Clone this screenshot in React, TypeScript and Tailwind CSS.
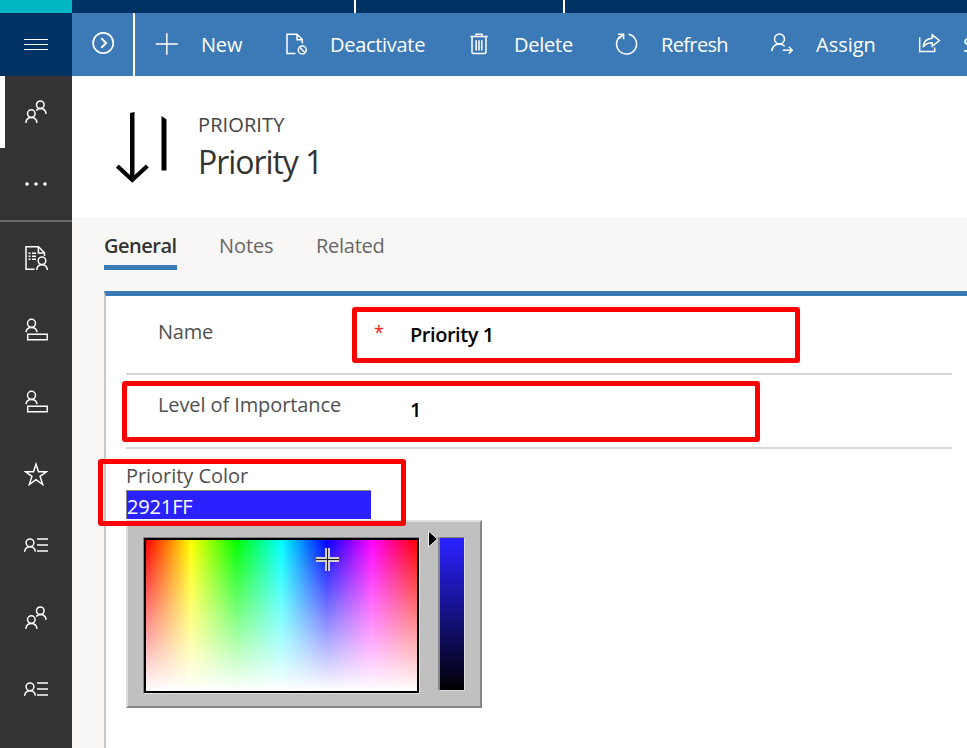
import type { ReactNode } from "react";

const stroke = {
  fill: "none",
  stroke: "currentColor",
  strokeWidth: 1.5,
};

function Icon({ children }: { children: ReactNode }) {
  return (
    <svg className="size-6 shrink-0" viewBox="0 0 24 24" {...stroke}>
      {children}
    </svg>
  );
}

function PeopleIcon() {
  return (
    <Icon>
      <circle cx="16.3" cy="4.8" r="3.8" />
      <path d="M12.2 10.6c1.2-1.4 2.5-2 4.1-2 3.2 0 5.4 2 5.8 5.2" />
      <circle cx="7.3" cy="13.6" r="3.8" />
      <path d="M1.8 22.8c.4-3.2 2.6-5.3 5.6-5.3s5.2 2.1 5.6 5.3" />
    </Icon>
  );
}

function DotsIcon() {
  return (
    <Icon>
      <g fill="#fff" stroke="none">
        <circle cx="3" cy="12" r="1.8" />
        <circle cx="12" cy="12" r="1.8" />
        <circle cx="21" cy="12" r="1.8" />
      </g>
    </Icon>
  );
}

function ContactDocIcon() {
  return (
    <Icon>
      <path d="M10.5 23.3H2V.8h12.5l6 6V10" />
      <path d="M14.4.8v6.3h6.1" />
      <path d="M4.5 7.2h2M8 7.2h4M4.5 10.2h2M8 10.2h4M4.5 13.2h2M8 13.2h4" />
      <circle cx="18" cy="14.8" r="3.8" />
      <path d="M12.6 24c.4-3.2 2.4-5.2 5.4-5.2s5 2 5.4 5.2" />
    </Icon>
  );
}

function PersonBarIcon() {
  return (
    <Icon>
      <circle cx="7.5" cy="5.3" r="4" />
      <path d="M2 14.2c.4-3.2 2.6-4.8 5.5-4.8s5.1 1.6 5.6 4.8" />
      <path d="M3.7 16.2h19.6v5.6H3.7z" />
    </Icon>
  );
}

function StarIcon() {
  return (
    <Icon>
      <path d="M12 2.2l2.5 7.5h8l-6.4 4.7 2.6 8.1-6.7-4.9-6.7 4.9 2.6-8.1L1.5 9.7h8z" />
    </Icon>
  );
}

function PersonListIcon() {
  return (
    <Icon>
      <circle cx="6" cy="8.8" r="3.9" />
      <path d="M.6 17.700c.4-3.2 2.6-5 5.4-5s5 1.8 5.4 5" />
      <path d="M13 4.900h11M13 10.900h11M13 16.900h11" />
    </Icon>
  );
}

function DeactivateIcon() {
  return (
    <Icon>
      <path d="M10.5 21.6H2V2.2h10l5.3 5.3v4" />
      <path d="M12 2.2v5.5h5.3" />
      <circle cx="17.3" cy="18" r="4" />
      <path d="M14.6 15.3l5.4 5.4" />
    </Icon>
  );
}

function TrashIcon() {
  return (
    <Icon>
      <path d="M2.3 4.5h17.4M8 4.2V2.3h6v1.9M4 4.8v15.4q0 1.4 1.4 1.4h11.2q1.4 0 1.4-1.4V4.8" />
      <path d="M8.2 8.2v10.4M11 8.2v10.4M13.8 8.2v10.4" />
    </Icon>
  );
}

function RefreshIcon() {
  return (
    <Icon>
      <path d="M13.6 2.3A10 10 0 1 1 6.3 3.6" />
      <path d="M3 2.3h5.6v5" />
      <path d="M8.5 2.5L4 6.6" />
    </Icon>
  );
}

function AssignIcon() {
  return (
    <Icon>
      <circle cx="9.5" cy="7" r="5" />
      <path d="M1.8 19.2c.5-4.4 3.4-7.2 7.6-7.2 2.4 0 4 .8 5.2 2.2" />
      <path d="M12.8 18.2h9.2M18.8 14.8l3.4 3.4-3.4 3.4" />
    </Icon>
  );
}

function ShareIcon() {
  return (
    <Icon>
      <path d="M1.7 5.3v14.3h15v-4.2" />
      <path d="M14.2 2.8l7.2 5.7-7.2 5.8v-3.6c-4.2 0-7 1.2-9 4.3.4-5.2 3.7-8.4 9-8.7z" />
    </Icon>
  );
}

const commands = [
  {
    title: "New",
    width: "w-[130px] gap-[22px]",
    text: "tracking-[-0.2px]",
    icon: <Icon><path d="M.8 12h22M11.8 1.3v21.4" /></Icon>,
  },
  { title: "Deactivate", width: "w-[183px] gap-[21px]", text: "tracking-[-0.3px]", icon: <DeactivateIcon /> },
  { title: "Delete", width: "w-[147px] gap-[22px]", text: "tracking-[-0.25px]", icon: <TrashIcon /> },
  { title: "Refresh", width: "w-[155px] gap-[22px]", text: "tracking-[-0.65px]", icon: <RefreshIcon /> },
  { title: "Assign", width: "w-[148px] gap-[22px]", text: "", icon: <AssignIcon /> },
  { title: "Share", width: "w-[130px] gap-[21px]", text: "tracking-[-0.6px]", icon: <ShareIcon /> },
];

const navItems = [
  <ContactDocIcon />,
  <PersonBarIcon />,
  <PersonBarIcon />,
  <StarIcon />,
  <PersonListIcon />,
  <PeopleIcon />,
  <PersonListIcon />,
];

function TopBar() {
  return (
    <div className="flex h-[13px] shrink-0 bg-[#003264]">
      <div className="w-[72px] bg-[#00b7c3]" />
      <div className="w-[284px] border-r-2 border-white" />
      <div className="w-[209px] border-r-2 border-white" />
    </div>
  );
}

function CommandBar() {
  return (
    <div className="flex h-[63px] shrink-0 bg-[#3b79b7] text-white">
      <div className="flex w-[72px] shrink-0 items-center justify-center bg-[#003264]">
        <div className="flex h-[11px] w-6 flex-col justify-between">
          <div className="h-px bg-white" />
          <div className="h-px bg-white" />
          <div className="h-px bg-white" />
        </div>
      </div>
      <div className="flex w-[63px] shrink-0 items-center justify-center border-r-2 border-white pb-[3px]">
        <Icon>
          <circle cx="12.2" cy="12" r="10.1" strokeWidth="1.7" />
          <path d="M10.3 7.2l4.8 4.8-4.8 4.8" strokeWidth="2" />
        </Icon>
      </div>
      <div className="flex items-center pl-5">
        {commands.map((command) => (
          <div key={command.title} className={`flex shrink-0 items-center ${command.width}`}>
            <div className="pb-0.5">{command.icon}</div>
            <span className={`text-[20px] font-medium ${command.text}`}>{command.title}</span>
          </div>
        ))}
      </div>
    </div>
  );
}

function Sidebar() {
  return (
    <nav className="w-[72px] shrink-0 bg-[#333] text-white">
      <div className="flex h-[72px] items-center border-l-[5px] border-white pl-[19px]">
        <PeopleIcon />
      </div>
      <div className="flex h-[74px] items-center justify-center border-b-2 border-[#6b6b6b]">
        <DotsIcon />
      </div>
      {navItems.map((item, i) => (
        <div key={i} className="flex h-[72px] items-center justify-center">
          {item}
        </div>
      ))}
    </nav>
  );
}

function RecordHeader() {
  return (
    <header className="flex h-[142px] shrink-0 bg-white pt-[34px] pl-11 text-[#333]">
      <svg className="h-[74px] w-[52px]" viewBox="0 0 52 74">
        <path d="M14 3l4.500-1v67h-4.500z" />
        <path d="M1.300 56l15 14 15-14" fill="none" stroke="#000" strokeWidth="4.200" />
        <path d="M45.500 6l5 3.500V60.500h-5z" />
      </svg>
      <div className="pl-[30px]">
        <p className="text-[20px] leading-[30px] tracking-[0.1px] text-[#444]">PRIORITY</p>
        <h1 className="text-[32px] leading-[44px] tracking-[-1.05px]">Priority 1</h1>
      </div>
    </header>
  );
}

function Tabs() {
  return (
    <div className="flex h-[73px] shrink-0 pt-3 pl-8 text-[20px] text-[#666]">
      <div className="h-10 w-[73px] border-b-[5px] border-[#3b79b7] leading-[32px] font-semibold tracking-[-0.5px] text-[#333]">
        General
      </div>
      <div className="ml-[42px] w-[97px] leading-[32px] tracking-[-0.1px]">Notes</div>
      <div className="leading-[32px] tracking-[-0.25px]">Related</div>
    </div>
  );
}

// brightness bar is drawn in 4px steps
const steps = Array.from({ length: 38 }, (_, i) => 1 - i / 38);

function ColorPicker() {
  return (
    <div className="flex h-[188px] w-[356px] border-2 border-t-[#ddd] border-r-[#868686] border-b-[#868686] border-l-[#ddd] bg-[#c0c0c0] pt-[15px] pl-[15px]">
      <div className="h-[157px] w-[277px] border border-t-[#868686] border-r-[#ddd] border-b-[#ddd] border-l-[#868686]">
        <div className="relative h-full border-2 border-black bg-[linear-gradient(to_bottom,transparent,#fff),linear-gradient(to_right,#f00,#ff0,#0f0,#0ff,#00f,#f0f,#f00)]">
          <svg className="absolute top-[8px] left-[170px] size-[23px]" viewBox="0 0 23 23">
            <path d="M9 0h5v9h9v5h-9v9H9v-9H0V9h9z" fill="#d0d0c8" />
            <path d="M11.500 0v23M0 11.500h23" stroke="#222" />
          </svg>
        </div>
      </div>
      <svg className="-mt-[7px] ml-2 h-[18px] w-[10px]" viewBox="0 0 10 18">
        <path d="M.5 1v16L9.500 9z" fill="#000" stroke="#eee" />
      </svg>
      <div className="h-[154px] w-[27px] border border-t-[#868686] border-r-[#ddd] border-b-[#ddd] border-l-2 border-l-[#868686]">
        {steps.map((v, i) => (
          <div
            key={i}
            className="h-1"
            style={{ backgroundColor: `rgb(${41 * v}, ${33 * v}, ${255 * v})` }}
          />
        ))}
      </div>
    </div>
  );
}

function GeneralForm() {
  return (
    <section className="ml-8 flex-1 border-t-[5px] border-l-2 border-t-[#3b79b7] border-l-[#c8c8c8] bg-white pl-5 text-[20px] text-[#505050]">
      <div className="flex h-[79px] w-[826px] border-b-2 border-[#d6d6d6] pl-8">
        <label className="w-[216px] pt-[20px] leading-[32px] tracking-[-0.2px]">Name</label>
        <span className="w-9 pt-[20px] text-[18px] leading-[32px] text-[#f01818]">*</span>
        <span className="pt-[23px] leading-[32px] font-semibold tracking-[-0.45px] text-black">Priority 1</span>
      </div>
      <div className="flex h-[74px] w-[826px] border-b-2 border-[#d6d6d6] pl-8">
        <label className="w-[252px] pt-[14px] leading-[32px] tracking-[-0.1px]">Level of Importance</label>
        <span className="pt-[19px] leading-[32px] font-semibold text-black">1</span>
      </div>
      <div className="h-[41px] pt-[11px] leading-[32px] tracking-[-0.05px]">Priority Color</div>
      <div className="h-[30px] w-[245px]">
        <div className="h-[29px] border-t border-l border-[#868686] bg-[#2921ff] leading-[31px] tracking-[-0.15px] text-white">
          2921FF
        </div>
      </div>
      <ColorPicker />
    </section>
  );
}

export default function App() {
  return (
    <div className="relative flex h-[748px] w-[967px] flex-col overflow-hidden bg-[#f8f7f6] font-['Open_Sans','Noto_Sans',sans-serif]">
      <TopBar />
      <CommandBar />
      <div className="flex min-h-0 flex-1">
        <Sidebar />
        <main className="flex min-w-0 flex-1 flex-col">
          <RecordHeader />
          <Tabs />
          <GeneralForm />
        </main>
      </div>
      {/* highlight frames */}
      <div className="absolute top-[307px] left-[352px] h-14 w-[448px] rounded-[3px] border-[5px] border-[#f00]" />
      <div className="absolute top-[381px] left-[122px] h-[61px] w-[638px] rounded-[3px] border-[5px] border-[#f00]" />
      <div className="absolute top-[459px] left-[98px] h-[67px] w-[308px] rounded-[3px] border-[5px] border-[#f00]" />
    </div>
  );
}
